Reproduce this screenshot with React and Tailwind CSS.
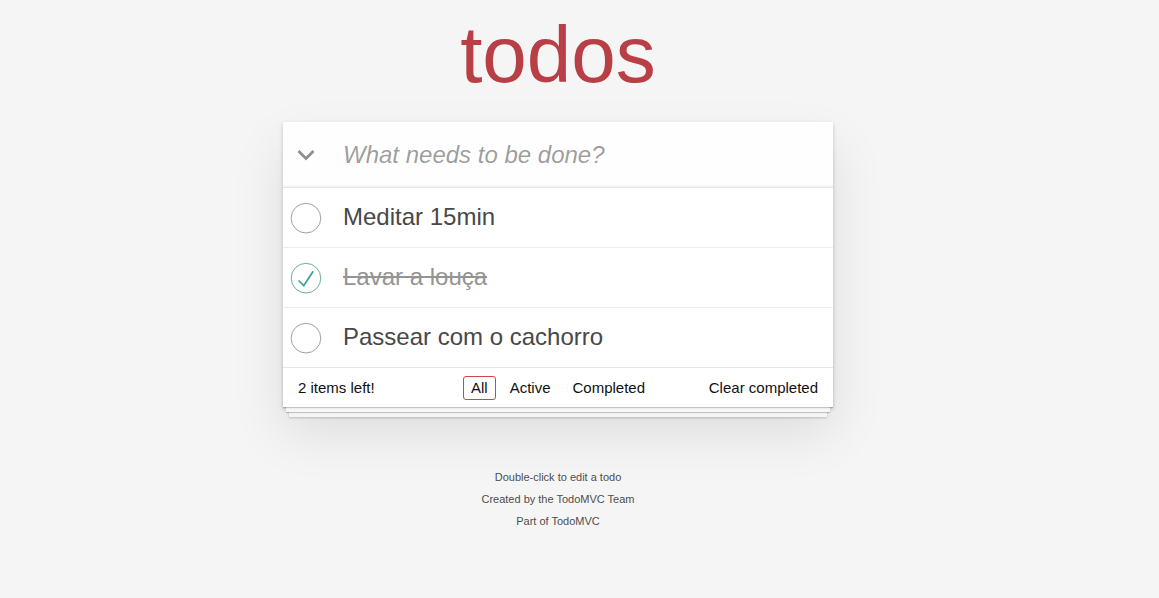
import React from "react";

const todos = [
  { text: "Meditar 15min", done: false },
  { text: "Lavar a louça", done: true },
  { text: "Passear com o cachorro", done: false },
];

function Toggle({ done }) {
  return (
    <svg width="40" height="40" viewBox="-10 -18 100 135" className="shrink-0">
      {done ? (
        <>
          <circle cx="50" cy="50" r="50" fill="none" stroke="#59A193" strokeWidth="3" />
          <path fill="#3EA390" d="M72 25L42 71 27 56l-4 4 20 20 34-52z" />
        </>
      ) : (
        <circle cx="50" cy="50" r="50" fill="none" stroke="#949494" strokeWidth="3" />
      )}
    </svg>
  );
}

export default function App() {
  return (
    <div className="min-h-screen w-full bg-[#f5f5f5] font-['Liberation_Sans','Helvetica_Neue',Helvetica,Arial,sans-serif] text-[14px] text-[#111111]">
      <div className="ml-[283px] w-[550px] flex flex-col">
        <h1 className="mt-[15px] h-[80px] text-center text-[80px] leading-none font-normal text-[#b83f45]">
          todos
        </h1>
        <section className="mt-[27px] bg-white shadow-[0_2px_4px_0_rgba(0,0,0,0.2),0_25px_50px_0_rgba(0,0,0,0.1)]">
          <header className="flex h-[65px] items-center bg-[rgba(0,0,0,0.003)] shadow-[inset_0_-2px_1px_rgba(0,0,0,0.03)]">
            <div className="flex w-[46px] h-full items-center justify-center shrink-0">
              <svg width="18" height="12" viewBox="0 0 18 12">
                <path d="M1.5 2 L9 9.5 L16.5 2" fill="none" stroke="#8f8f8f" strokeWidth="2.8" />
              </svg>
            </div>
            <input
              className="h-full flex-1 bg-transparent pl-[14px] pr-[16px] text-[24px] text-[#484848] outline-none placeholder:italic placeholder:text-[rgba(0,0,0,0.4)]"
              placeholder="What needs to be done?"
            />
          </header>
          <ul className="border-t border-[#e6e6e6]">
            {todos.map((t, i) => (
              <li
                key={i}
                className={
                  "flex h-[59px] items-center box-content " +
                  (i < todos.length - 1 ? "border-b border-[#ededed]" : "")
                }
              >
                <Toggle done={t.done} />
                <label
                  className={
                    "pl-[20px] text-[24px] leading-[1.2] " +
                    (t.done ? "text-[#949494] line-through" : "text-[#484848]")
                  }
                >
                  {t.text}
                </label>
              </li>
            ))}
          </ul>
          <footer className="relative grid h-[40px] grid-cols-[1fr_auto_1fr] items-center border-t border-[#e6e6e6] px-[15px] text-[15px] leading-[20px] text-[#111111] before:absolute before:inset-x-0 before:bottom-0 before:h-[50px] before:overflow-hidden before:content-[''] before:shadow-[0_1px_1px_rgba(0,0,0,0.2),0_8px_0_-3px_#f6f6f6,0_9px_1px_-3px_rgba(0,0,0,0.2),0_16px_0_-6px_#f6f6f6,0_17px_2px_-6px_rgba(0,0,0,0.2)]">
            <span className="justify-self-start">2 items left!</span>
            <ul className="flex items-center">
              <li>
                <a className="mx-[3px] block rounded-[3px] border border-[#CE4646] px-[7px] py-[1px] leading-[20px]">All</a>
              </li>
              <li>
                <a className="mx-[3px] block rounded-[3px] border border-transparent px-[7px] py-[1px] leading-[20px]">Active</a>
              </li>
              <li>
                <a className="mx-[3px] block rounded-[3px] border border-transparent px-[7px] py-[1px] leading-[20px]">Completed</a>
              </li>
            </ul>
            <span className="justify-self-end">Clear completed</span>
          </footer>
        </section>
        <footer className="mt-[65px] flex flex-col items-center gap-[11px] text-[11px] leading-none text-[#4d4d4d] [text-shadow:0_1px_0_rgba(255,255,255,0.5)]">
          <p>Double-click to edit a todo</p>
          <p>Created by the TodoMVC Team</p>
          <p>Part of TodoMVC</p>
        </footer>
      </div>
    </div>
  );
}
